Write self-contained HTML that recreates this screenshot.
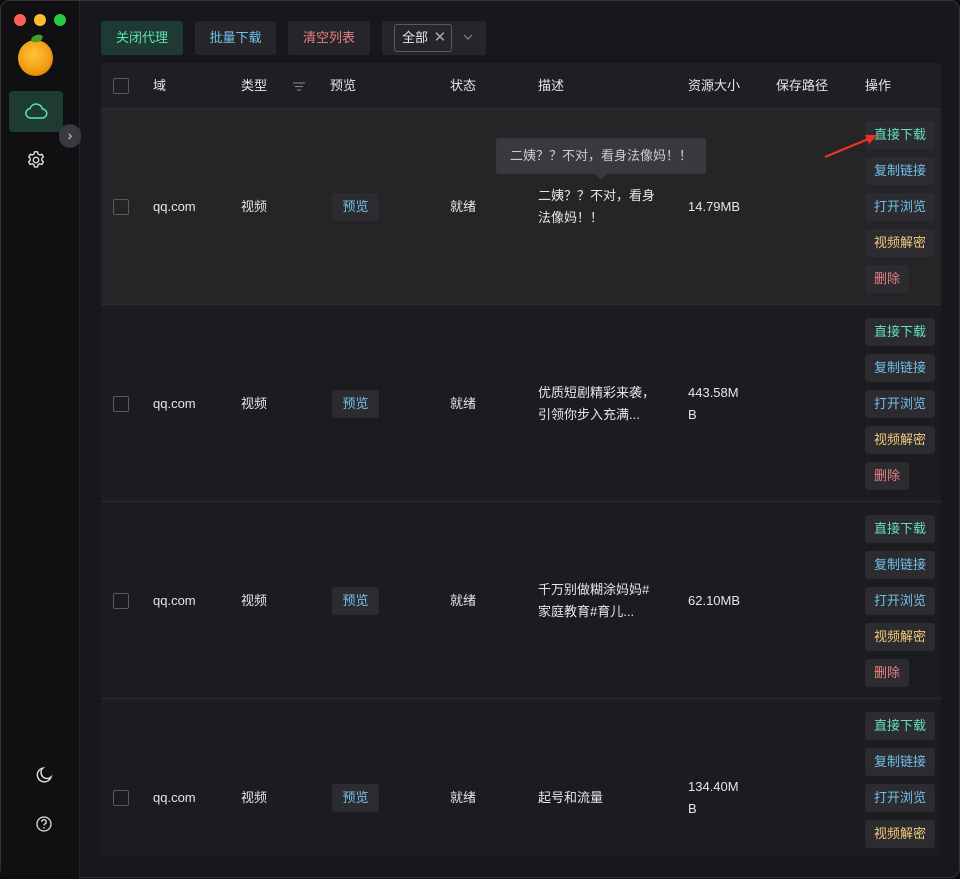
<!DOCTYPE html><html><head><meta charset="utf-8"><style>
*{box-sizing:border-box;margin:0;padding:0}
body{width:960px;height:878px;background:#0e0e11;font-family:"Liberation Sans","Noto Sans CJK SC",sans-serif;font-size:13px;color:#e6e6e8;position:relative;overflow:hidden}
.win{position:absolute;left:0;top:0;width:960px;height:878px;background:#18181c;border-radius:10px;border:1px solid #333}
.side{position:absolute;left:0;top:0;width:79px;height:878px;background:#101013;border-right:1px solid #26262a;border-radius:10px 0 0 10px}
.dot{position:absolute;top:13px;width:12px;height:12px;border-radius:50%}
.abs{position:absolute}
.btn{position:absolute;top:20px;height:34px;border-radius:3px;background:#26262a;line-height:34px;text-align:center;font-size:13px}
.table{position:absolute;left:100px;top:62px;width:840px;height:793px;background:#1c1c20}
.hdr{position:absolute;left:0;top:0;width:840px;height:46px;border-bottom:1px solid #2c2c30;background:#1f1f23}
.row{position:absolute;left:0;width:840px;height:196px;border-bottom:1px solid #2c2c30}
.t{position:absolute;white-space:nowrap;line-height:20px}
.t2{position:absolute;white-space:nowrap;line-height:22px;top:76px}
.cb{position:absolute;left:12px;width:16px;height:16px;border:1px solid #5a5a5e;border-radius:2px}
.op{position:absolute;left:764px;height:28px;line-height:28px;padding:0 9px;background:#2c2c30;border-radius:3px;font-size:13px}
.pv{position:absolute;left:231px;width:47px;height:28px;line-height:28px;text-align:center;background:#2c2c30;border-radius:3px;color:#70c0e8}
</style></head><body><div class="win">
<div class="side">
<div class="dot" style="left:13px;background:#ff5f57"></div>
<div class="dot" style="left:33px;background:#febc2e"></div>
<div class="dot" style="left:53px;background:#28c840"></div>
<div class="abs" style="left:17px;top:39px;width:35px;height:36px;border-radius:50%;background:radial-gradient(circle at 45% 40%,#ffc43a,#f09a10 60%,#c86a00)"></div>
<div class="abs" style="left:30px;top:34px;width:12px;height:7px;border-radius:50%;background:#4a9a2a;transform:rotate(-20deg)"></div>
<div class="abs" style="left:8px;top:90px;width:54px;height:41px;border-radius:4px;background:#1d3a33"></div>
<svg class="abs" style="left:23px;top:101px" width="24" height="18" viewBox="0 0 24 18"><path d="M6 16h12a4.5 4.5 0 0 0 .5-9A6.5 6.5 0 0 0 6 6.5 4.8 4.8 0 0 0 6 16z" fill="none" stroke="#63e2b7" stroke-width="1.5"/></svg>
<div class="abs" style="left:58px;top:123px;width:22px;height:24px;border-radius:12px;background:#3a3a3e;color:#ddd;text-align:center;line-height:22px;font-size:14px">›</div>
<svg class="abs" style="left:24px;top:148px" width="22" height="22" viewBox="0 0 24 24"><circle cx="12" cy="12" r="3" fill="none" stroke="#ddd" stroke-width="1.5"/><path d="M10.3 3h3.4l.5 2.4 1.9 1.1 2.3-.8 1.7 2.9-1.8 1.6v2.2l1.8 1.6-1.7 2.9-2.3-.8-1.9 1.1-.5 2.4h-3.4l-.5-2.4-1.9-1.1-2.3.8-1.7-2.9 1.8-1.6v-2.2L4.1 8.6l1.7-2.9 2.3.8 1.9-1.1z" fill="none" stroke="#ddd" stroke-width="1.5" stroke-linejoin="round"/></svg>
<svg class="abs" style="left:33px;top:765px" width="20" height="20" viewBox="0 0 20 20"><path d="M9 2a7 7 0 1 0 8 9A6 6 0 0 1 9 2z" fill="none" stroke="#ddd" stroke-width="1.4"/></svg>
<svg class="abs" style="left:34px;top:814px" width="18" height="18" viewBox="0 0 18 18"><circle cx="9" cy="9" r="7" fill="none" stroke="#ddd" stroke-width="1.3"/><path d="M6.8 7a2.2 2.2 0 1 1 3 2c-.6.3-.8.7-.8 1.4" fill="none" stroke="#ddd" stroke-width="1.3"/><circle cx="9" cy="12.8" r=".8" fill="#ddd"/></svg>
</div>
<div class="btn" style="left:100px;width:82px;background:#1d3a33;color:#63e2b7">关闭代理</div>
<div class="btn" style="left:194px;width:81px;color:#70c0e8">批量下载</div>
<div class="btn" style="left:287px;width:82px;color:#e88080">清空列表</div>
<div class="btn" style="left:381px;width:104px"></div>
<div class="abs" style="left:393px;top:23px;width:58px;height:28px;border:1px solid #5a5a5e;border-radius:3px;line-height:26px;padding-left:7px">全部 <span style="color:#aaa;font-size:15px;margin-left:2px">✕</span></div>
<svg class="abs" style="left:462px;top:33px" width="10" height="7"><path d="M1 1l4 4 4-4" fill="none" stroke="#888" stroke-width="1.2"/></svg>
<div class="table">
<div class="hdr">
<div class="cb" style="top:15px"></div>
<div class="t" style="left:52px;top:13px">域</div>
<div class="t" style="left:140px;top:13px">类型</div>
<svg class="abs" style="left:192px;top:19px" width="12" height="9"><path d="M0 1h12M2 4.5h8M4 8h4" stroke="#888" stroke-width="1"/></svg>
<div class="t" style="left:229px;top:13px">预览</div>
<div class="t" style="left:349px;top:13px">状态</div>
<div class="t" style="left:437px;top:13px">描述</div>
<div class="t" style="left:587px;top:13px">资源大小</div>
<div class="t" style="left:675px;top:13px">保存路径</div>
<div class="t" style="left:764px;top:13px">操作</div>
</div>
<div class="row" style="top:46px;background:#252528">
<div class="cb" style="top:90px"></div><div class="t" style="left:52px;top:88px">qq.com</div><div class="t" style="left:140px;top:88px">视频</div><div class="pv" style="top:84px">预览</div><div class="t" style="left:349px;top:88px">就绪</div>
<div class="t2" style="left:437px">二姨？？不对，看身<br>法像妈！！</div><div class="t" style="left:587px;top:88px">14.79MB</div>
<div class="op" style="top:12px;color:#63e2b7">直接下载</div><div class="op" style="top:48px;color:#70c0e8">复制链接</div><div class="op" style="top:84px;color:#70c0e8">打开浏览</div><div class="op" style="top:120px;color:#f2c97d">视频解密</div><div class="op" style="top:156px;color:#e88080">删除</div>
</div>
<div class="row" style="top:243px">
<div class="cb" style="top:90px"></div><div class="t" style="left:52px;top:88px">qq.com</div><div class="t" style="left:140px;top:88px">视频</div><div class="pv" style="top:84px">预览</div><div class="t" style="left:349px;top:88px">就绪</div>
<div class="t2" style="left:437px">优质短剧精彩来袭，<br>引领你步入充满...</div><div class="t2" style="left:587px">443.58M<br>B</div>
<div class="op" style="top:12px;color:#63e2b7">直接下载</div><div class="op" style="top:48px;color:#70c0e8">复制链接</div><div class="op" style="top:84px;color:#70c0e8">打开浏览</div><div class="op" style="top:120px;color:#f2c97d">视频解密</div><div class="op" style="top:156px;color:#e88080">删除</div>
</div>
<div class="row" style="top:440px">
<div class="cb" style="top:90px"></div><div class="t" style="left:52px;top:88px">qq.com</div><div class="t" style="left:140px;top:88px">视频</div><div class="pv" style="top:84px">预览</div><div class="t" style="left:349px;top:88px">就绪</div>
<div class="t2" style="left:437px">千万别做糊涂妈妈#<br>家庭教育#育儿...</div><div class="t" style="left:587px;top:88px">62.10MB</div>
<div class="op" style="top:12px;color:#63e2b7">直接下载</div><div class="op" style="top:48px;color:#70c0e8">复制链接</div><div class="op" style="top:84px;color:#70c0e8">打开浏览</div><div class="op" style="top:120px;color:#f2c97d">视频解密</div><div class="op" style="top:156px;color:#e88080">删除</div>
</div>
<div class="row" style="top:637px;height:156px;border:none">
<div class="cb" style="top:90px"></div><div class="t" style="left:52px;top:88px">qq.com</div><div class="t" style="left:140px;top:88px">视频</div><div class="pv" style="top:84px">预览</div><div class="t" style="left:349px;top:88px">就绪</div>
<div class="t" style="left:437px;top:88px">起号和流量</div><div class="t2" style="left:587px">134.40M<br>B</div>
<div class="op" style="top:12px;color:#63e2b7">直接下载</div><div class="op" style="top:48px;color:#70c0e8">复制链接</div><div class="op" style="top:84px;color:#70c0e8">打开浏览</div><div class="op" style="top:120px;color:#f2c97d">视频解密</div>
</div>
</div>
<div class="abs" style="left:495px;top:137px;width:210px;height:36px;background:#3a3a3e;border-radius:3px;color:#ccc;line-height:36px;padding-left:14px">二姨？？不对，看身法像妈！！</div>
<div class="abs" style="left:594px;top:173px;width:0;height:0;border-left:6px solid transparent;border-right:6px solid transparent;border-top:6px solid #3a3a3e"></div>
<svg class="abs" style="left:820px;top:125px" width="60" height="35"><path d="M4 31L52 11" stroke="#ee3322" stroke-width="2.2"/><path d="M56 9l-12 0 4 9z" fill="#ee3322"/></svg>
</div></body></html>
